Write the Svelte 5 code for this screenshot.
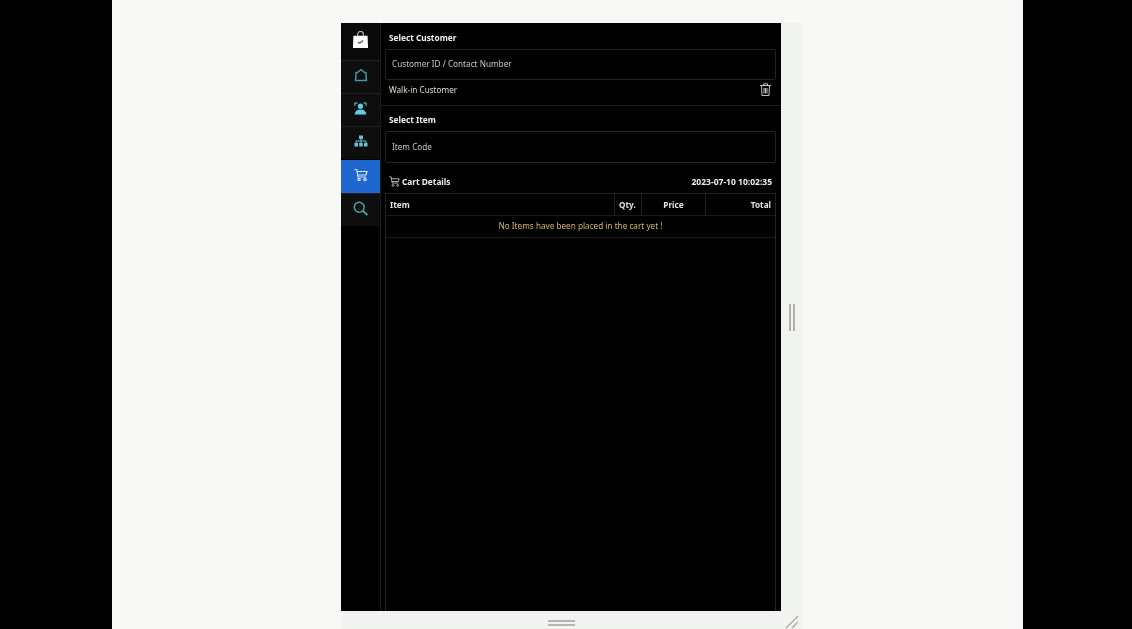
<script>
    const navItems = ['home', 'face', 'tree', 'cart', 'search'];
</script>

<div class="page">
    <div class="resizer">
        <div class="panel">
            <nav class="sidebar">
                <div class="logo">
                    <svg width="17" height="18" viewBox="0 0 18 19">
                        <path d="M6 6V3.500a3 3 0 0 1 6 0V6" fill="none" stroke="#bbb" stroke-width="1.200" />
                        <path d="M1.500 5h15l.5 13H1z" fill="#fff" />
                        <path d="M6.200 11.500l2 1.500 3.500-3" fill="none" stroke="#555" stroke-width="1.300" />
                    </svg>
                </div>
                {#each navItems as item}
                    <div class="nav-item" class:active={item === 'cart'}>
                        {#if item === 'home'}
                            <svg width="14" height="14" viewBox="0 0 14 14" fill="none" stroke="#3f9aa3" stroke-width="1.500">
                                <path d="M7 1.500L10.500 4.500H12V8l.5 4.500h-11L2 8V4.500h1.500z" stroke-linejoin="round" />
                            </svg>
                        {:else if item === 'face'}
                            <svg width="15" height="13" viewBox="0 0 16 14" fill="none">
                                <path d="M2 4V1h3M11 1h3v3" stroke="#6fd3e0" stroke-width="1.100" />
                                <circle cx="8" cy="4.500" r="2.800" fill="#5fd0e2" />
                                <path d="M1.500 13.500c.5-3.500 3-5.500 6.500-5.500s6 2 6.500 5.500z" fill="#5fd0e2" />
                            </svg>
                        {:else if item === 'tree'}
                            <svg width="14" height="12" viewBox="0 0 14 12" fill="#62c6d6">
                                <rect x="5" y="0.500" width="4" height="3.500" />
                                <rect x="0.500" y="8" width="3.500" height="3.500" />
                                <rect x="5.200" y="8" width="3.500" height="3.500" />
                                <rect x="10" y="8" width="3.500" height="3.500" />
                                <path d="M2 8V6h10v2M7 4v4" fill="none" stroke="#62c6d6" stroke-width="1" />
                            </svg>
                        {:else if item === 'cart'}
                            <svg width="14" height="14" viewBox="0 0 14 14" fill="none" stroke="#d5e6fa" stroke-width="1.200">
                                <path d="M.5 1.500h2.200l1.300 7.500h8M3 3.500h10l-1 3.500H3.700" />
                                <circle cx="5" cy="11.500" r="1.200" />
                                <circle cx="11" cy="11.500" r="1.200" />
                            </svg>
                        {:else}
                            <svg width="15" height="15" viewBox="0 0 14 14" fill="none" stroke="#4aa5ad" stroke-width="1.400">
                                <circle cx="5.800" cy="5.800" r="4.600" />
                                <path d="M9.200 9.200l4.200 4" stroke-width="1.800" />
                            </svg>
                        {/if}
                    </div>
                {/each}
            </nav>

            <main class="content">
                <section class="customer">
                    <h4 class="title">Select Customer</h4>
                    <div class="field">Customer ID / Contact Number</div>
                    <div class="walk-in">
                        <span>Walk-in Customer</span>
                        <svg width="11" height="13" viewBox="0 0 11 13" fill="none" stroke="#c4c4c4" stroke-width="1">
                            <path d="M0 2.500h11M3.500 2.500V.8h4v1.700M1.500 2.500l.5 10h7l.5-10M4 5v5.500M5.500 5v5.500M7 5v5.500" />
                        </svg>
                    </div>
                </section>

                <section class="item">
                    <h4 class="title">Select Item</h4>
                    <div class="field">Item Code</div>
                </section>

                <div class="cart-head">
                    <div class="cart-title">
                        <svg width="11" height="11" viewBox="0 0 14 14" fill="none" stroke="#ccc" stroke-width="1.100">
                            <path d="M.5 1h2.200l1.300 8h8M3 3.500h10l-1 3.500H3.700" />
                            <circle cx="5" cy="12" r="1.200" />
                            <circle cx="11" cy="12" r="1.200" />
                        </svg>
                        <span>Cart Details</span>
                    </div>
                    <span class="stamp">2023-07-10 10:02:35</span>
                </div>

                <div class="table">
                    <div class="row head">
                        <div class="col-item">Item</div>
                        <div class="col-qty">Qty.</div>
                        <div class="col-price">Price</div>
                        <div class="col-total">Total</div>
                    </div>
                    <div class="empty">No Items have been placed in the cart yet !</div>
                </div>
            </main>
        </div>

        <div class="grip-right"></div>
        <div class="grip-bottom"></div>
        <svg class="grip-corner" width="14" height="14" viewBox="0 0 14 14" stroke="#a9aaa8" stroke-width="1.300">
            <path d="M1 13L13 1M7 13l6-6" />
        </svg>
    </div>
</div>

<style>
    :global(body) {
        margin: 0;
        background: #000;
        font-family: "Noto Sans", "Open Sans", sans-serif;
    }

    .page {
        width: 911px;
        height: 629px;
        margin-left: 112px;
        padding: 23px 0 0 229px;
        box-sizing: border-box;
        background: #f8f9f7;
        overflow: hidden;
    }

    .resizer {
        position: relative;
        width: 462px;
        height: 606px;
        padding-bottom: 18px;
        box-sizing: border-box;
        background: #f1f3f0;
    }

    .panel {
        display: flex;
        width: 440px;
        height: 588px;
        background: #000;
        color: #e6e6e6;
        font-size: 8.2px;
        filter: blur(0.3px);
    }

    .sidebar {
        flex: none;
        width: 39px;
        border-right: 1px solid #1c1c1c;
    }

    .logo {
        display: flex;
        align-items: center;
        justify-content: center;
        height: 34px;
        padding-bottom: 3px;
        background: #0a0a0a;
    }

    .nav-item {
        display: flex;
        align-items: center;
        justify-content: center;
        height: 28px;
        padding-bottom: 4px;
        border-top: 1px solid #1f1f1f;
        background: #0e0e0e;
    }

    .nav-item.active {
        margin-top: 1px;
        background: #1f66d0;
        border-top-color: #1f66d0;
    }

    .content {
        flex: 1;
        display: flex;
        flex-direction: column;
        min-width: 0;
    }

    .title {
        margin: 0;
        padding-left: 4px;
        color: #f2f2f2;
        font-size: 8.3px;
        font-weight: 700;
        line-height: 12px;
    }

    .customer {
        padding: 9px 5px 0 4px;
        height: 83px;
        box-sizing: border-box;
        border-bottom: 1px solid #1e1e1e;
    }

    .field {
        display: flex;
        align-items: center;
        height: 31px;
        margin-top: 5px;
        padding: 0 0 2px 6px;
        box-sizing: border-box;
        border: 1px solid #242424;
        border-radius: 2px;
        color: #c8c8c8;
    }

    .walk-in {
        display: flex;
        align-items: center;
        justify-content: space-between;
        height: 21px;
        padding: 0 5px 2px 4px;
        box-sizing: border-box;
        color: #e0d8c0;
    }

    .item {
        padding: 8px 5px 0 4px;
    }

    .item .field {
        height: 32px;
    }

    .cart-head {
        display: flex;
        align-items: center;
        justify-content: space-between;
        height: 16px;
        margin-top: 10px;
        padding: 0 9px 0 8px;
        color: #eee;
        font-size: 8.3px;
        font-weight: 700;
    }

    .cart-title {
        display: flex;
        align-items: center;
        gap: 2px;
    }

    .stamp {
        font-size: 8.5px;
    }

    .table {
        flex: 1;
        margin: 4px 5px 0 4px;
        border: 1px solid #242424;
        border-bottom: 0;
    }

    .row {
        display: flex;
        height: 22px;
        border-bottom: 1px solid #1a1a1a;
        box-sizing: border-box;
    }

    .head {
        color: #e4e4e4;
        font-weight: 700;
    }

    .head div {
        display: flex;
        align-items: center;
        padding: 0 4px;
        box-sizing: border-box;
    }

    .col-item {
        width: 228px;
    }

    .col-qty {
        width: 27px;
        border-left: 1px solid #242424;
    }

    .col-price {
        width: 64px;
        justify-content: center;
        border-left: 1px solid #242424;
    }

    .col-total {
        flex: 1;
        justify-content: flex-end;
        border-left: 1px solid #242424;
    }

    .empty {
        height: 22px;
        line-height: 20px;
        box-sizing: border-box;
        border-bottom: 1px solid #1c1c1c;
        text-align: center;
        color: #d9b566;
    }

    .grip-right {
        position: absolute;
        left: 447.500px;
        top: 281px;
        width: 2px;
        height: 27px;
        border: solid #b0b1af;
        border-width: 0 2.500px;
    }

    .grip-bottom {
        position: absolute;
        left: 207px;
        top: 596.500px;
        width: 27px;
        height: 2px;
        border: solid #b5b6b4;
        border-width: 2px 0;
    }

    .grip-corner {
        position: absolute;
        left: 444px;
        top: 592px;
    }
</style>
